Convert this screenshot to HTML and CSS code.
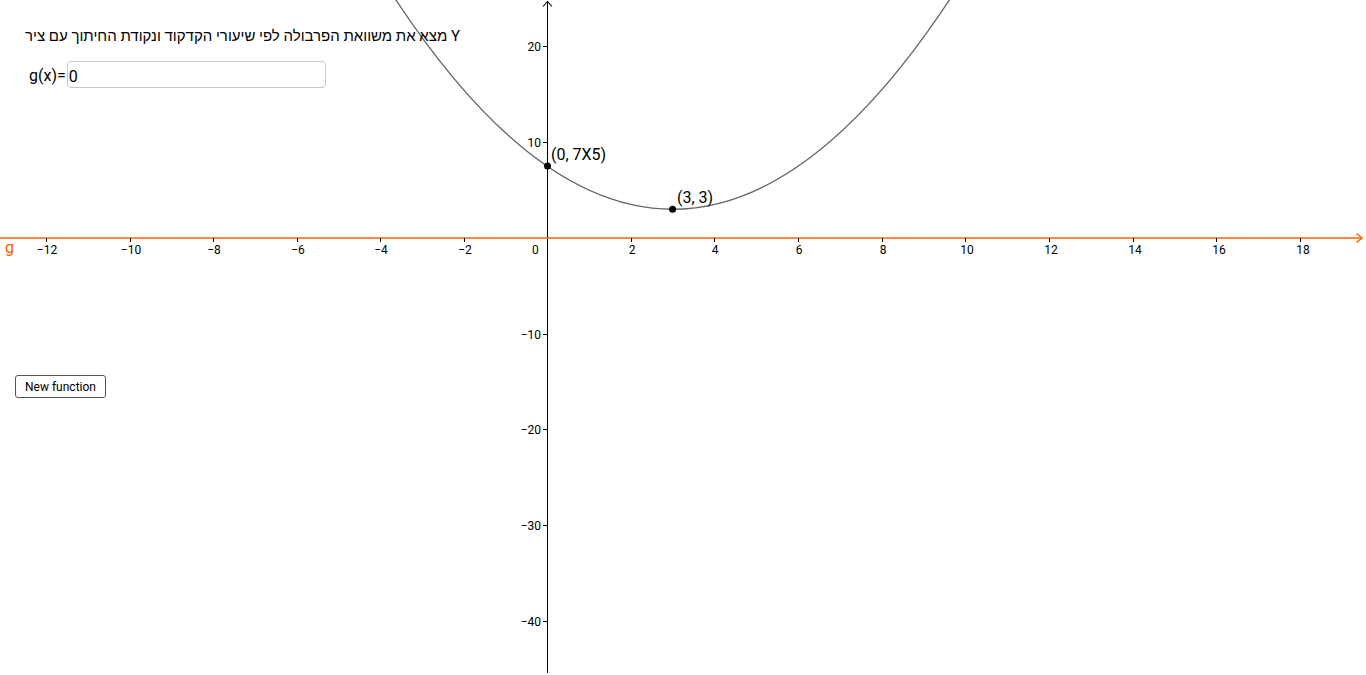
FILE: index.html
```html
<!DOCTYPE html>
<html lang="he">
<head>
<meta charset="utf-8">
<title>Parabola</title>
<link rel="stylesheet" href="styles.css">
</head>
<body>
<div class="stage">
  <svg class="graph" width="1366" height="675" viewBox="0 0 1366 675" xmlns="http://www.w3.org/2000/svg">
    <!-- y axis -->
    <line class="axis" x1="547.5" y1="1" x2="547.5" y2="673"/>
    <polyline class="axis arrow" points="543,6.5 547.5,1.5 552,6.5"/>
    <g class="axis">
      <line x1="543" y1="46.5" x2="547" y2="46.5"/>
      <line x1="543" y1="142.5" x2="547" y2="142.5"/>
      <line x1="543" y1="334.5" x2="547" y2="334.5"/>
      <line x1="543" y1="429.5" x2="547" y2="429.5"/>
      <line x1="543" y1="525.5" x2="547" y2="525.5"/>
      <line x1="543" y1="621.5" x2="547" y2="621.5"/>
    </g>
    <g class="lbl ylbl">
      <text x="541" y="51">20</text>
      <text x="541" y="147">10</text>
      <text x="541" y="339">−10</text>
      <text x="541" y="434">−20</text>
      <text x="541" y="530">−30</text>
      <text x="541" y="626">−40</text>
    </g>
    <!-- x axis -->
    <line class="xaxis" x1="0" y1="238" x2="1362" y2="238"/>
    <polyline class="xaxis arrow" points="1356.5,233.5 1362,238 1356.5,242.5"/>
    <g class="xtick">
      <line x1="46.5" y1="238" x2="46.5" y2="242"/>
      <line x1="130.5" y1="238" x2="130.5" y2="242"/>
      <line x1="213.5" y1="238" x2="213.5" y2="242"/>
      <line x1="297.5" y1="238" x2="297.5" y2="242"/>
      <line x1="380.5" y1="238" x2="380.5" y2="242"/>
      <line x1="464.5" y1="238" x2="464.5" y2="242"/>
      <line x1="631.5" y1="238" x2="631.5" y2="242"/>
      <line x1="714.5" y1="238" x2="714.5" y2="242"/>
      <line x1="798.5" y1="238" x2="798.5" y2="242"/>
      <line x1="882.5" y1="238" x2="882.5" y2="242"/>
      <line x1="965.5" y1="238" x2="965.5" y2="242"/>
      <line x1="1049.5" y1="238" x2="1049.5" y2="242"/>
      <line x1="1133.5" y1="238" x2="1133.5" y2="242"/>
      <line x1="1216.5" y1="238" x2="1216.5" y2="242"/>
      <line x1="1300.5" y1="238" x2="1300.5" y2="242"/>
    </g>
    <g class="lbl xlbl">
      <text x="47" y="254">−12</text>
      <text x="131" y="254">−10</text>
      <text x="214" y="254">−8</text>
      <text x="298" y="254">−6</text>
      <text x="381" y="254">−4</text>
      <text x="465" y="254">−2</text>
      <text x="632" y="254">2</text>
      <text x="715" y="254">4</text>
      <text x="799" y="254">6</text>
      <text x="883" y="254">8</text>
      <text x="967" y="254">10</text>
      <text x="1051" y="254">12</text>
      <text x="1135" y="254">14</text>
      <text x="1219" y="254">16</text>
      <text x="1303" y="254">18</text>
    </g>
    <text class="lbl" x="532" y="254">0</text>
    <text class="glabel" x="5" y="253">g</text>
    <!-- parabola y = 0.5(x-3)^2 + 3 -->
    <path class="curve" d="M389.4,-10 Q672.6,428.5 955.9,-10"/>
    <!-- points -->
    <circle class="pt" cx="547.5" cy="166" r="3.5"/>
    <circle class="pt" cx="672.6" cy="209.2" r="3.5"/>
    <text class="ptlbl" x="551" y="160">(0, 7X5)</text>
    <text class="ptlbl" x="677" y="203">(3, 3)</text>
  </svg>

  <div class="title">מצא את משוואת הפרבולה לפי שיעורי הקדקוד ונקודת החיתוך עם ציר Y</div>

  <div class="inputrow">
    <span class="inlabel">g(x)=</span>
    <div class="inbox">0</div>
  </div>

  <button class="newfn" type="button">New function</button>
</div>
</body>
</html>
```

FILE: styles.css
```css
html, body {
  margin: 0;
  padding: 0;
  background: #ffffff;
  overflow: hidden;
}

.stage {
  position: relative;
  width: 1366px;
  height: 675px;
  font-family: Roboto, "Liberation Sans", sans-serif;
  color: #000;
}

.graph {
  display: block;
}

.axis {
  stroke: #000;
  stroke-width: 1;
  fill: none;
}

.arrow {
  stroke-width: 1.1;
}

.xaxis {
  stroke: #ff6000;
  stroke-width: 1.6;
  fill: none;
}

.xtick line {
  stroke: #000;
  stroke-width: 1;
}

.lbl {
  font-family: Roboto, "Liberation Sans", sans-serif;
  font-size: 12px;
  fill: #000;
}

.ylbl text {
  text-anchor: end;
}

.xlbl text {
  text-anchor: middle;
}

.glabel {
  font-family: Roboto, "Liberation Sans", sans-serif;
  font-size: 16px;
  fill: #ff6000;
}

.curve {
  fill: none;
  stroke: #666666;
  stroke-width: 1.3;
}

.pt {
  fill: #000;
}

.ptlbl {
  font-family: Roboto, "Liberation Sans", sans-serif;
  font-size: 16px;
  fill: #000;
}

.title {
  position: absolute;
  left: 25px;
  top: 27px;
  font-size: 15px;
  line-height: 18px;
  white-space: nowrap;
}

.inputrow {
  position: absolute;
  left: 29px;
  top: 60px;
  display: flex;
  align-items: center;
  gap: 1px;
}

.inlabel {
  font-size: 16px;
  line-height: 27px;
  padding-top: 2px;
}

.inbox {
  box-sizing: border-box;
  width: 259px;
  height: 27px;
  border: 1px solid #c8c8c8;
  border-radius: 4px;
  padding: 2px 1px 0;
  font-size: 16px;
  line-height: 25px;
}

.newfn {
  position: absolute;
  left: 15px;
  top: 375px;
  box-sizing: border-box;
  width: 91px;
  height: 23px;
  padding: 0;
  background: #fff;
  border: 1px solid #555;
  border-radius: 3px;
  font-family: Roboto, "Liberation Sans", sans-serif;
  font-size: 12px;
  color: #000;
}
```
